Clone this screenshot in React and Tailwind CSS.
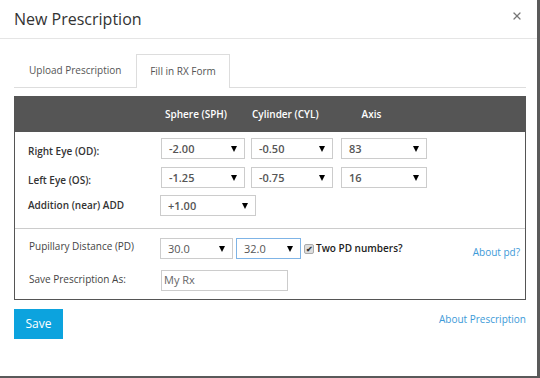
import { X } from 'lucide-react'

const font = { fontFamily: '"Open Sans", "Noto Sans", sans-serif' }

function Select({ value, className = '', focused = false }) {
  return (
    <div
      className={`flex items-center justify-between h-[21px] border pl-[7px] pr-[7px] text-[11px] text-[#555] ${
        focused ? 'border-[#7fb4e6]' : 'border-[#ccc]'
      } ${className}`}
    >
      <span className="pt-[2px]">{value}</span>
      {/* caret */}
      <span className="w-0 h-0 border-l-[3px] border-r-[3px] border-t-[6px] border-l-transparent border-r-transparent border-t-black" />
    </div>
  )
}

export default function App() {
  return (
    <div className="w-[540px] h-[378px] bg-[#5a5a5a] overflow-hidden" style={font}>
      <div className="w-[537px] h-[376px] bg-white flex flex-col">
        {/* Header */}
        <div className="flex justify-between h-[39px] border-b border-[#e5e5e5] pl-[14px] pr-[14px]">
          <h1 className="text-[16px] text-[#333] mt-[7px]">New Prescription</h1>
          <X className="w-[12px] h-[12px] text-[#777] mt-[10px]" strokeWidth={2.5} />
        </div>

        <div className="pl-[14px] pr-[11px] pt-[15px]">
          {/* Tabs */}
          <div className="flex h-[34px] border-b border-[#ddd]">
            <div className="w-[122px] flex items-center pl-[15px] text-[10px] text-[#555]">Upload Prescription</div>
            <div className="w-[94px] -mb-px bg-white border border-b-0 border-[#ddd] flex items-center justify-center text-[10px] text-[#555]">
              Fill in RX Form
            </div>
          </div>

          {/* RX box */}
          <div className="mt-[8px] border border-[#555]">
            <div className="h-[35px] bg-[#555] flex items-center text-[10px] font-semibold text-white">
              <span className="ml-[150px]">Sphere (SPH)</span>
              <span className="ml-[25px]">Cylinder (CYL)</span>
              <span className="ml-[43px]">Axis</span>
            </div>

            <div className="pt-[6px] pb-[12px] text-[10px] font-semibold text-[#333]">
              <div className="flex items-center h-[21px]">
                <span className="w-[146px] pl-[13px] pt-[5px]">Right Eye (OD):</span>
                <Select value="-2.00" className="w-[84px]" />
                <Select value="-0.50" className="w-[82px] ml-[6px]" />
                <Select value="83" className="w-[86px] ml-[8px]" />
              </div>
              <div className="flex items-center h-[21px] mt-[8px]">
                <span className="w-[146px] pl-[13px] pt-[5px]">Left Eye (OS):</span>
                <Select value="-1.25" className="w-[84px]" />
                <Select value="-0.75" className="w-[82px] ml-[6px]" />
                <Select value="16" className="w-[86px] ml-[8px]" />
              </div>
              <div className="flex items-center h-[21px] mt-[7px]">
                <span className="w-[145px] pl-[13px]">Addition (near) ADD</span>
                <Select value="+1.00" className="w-[96px]" />
              </div>
            </div>

            <div className="border-t border-[#ccc] pt-[9px] pb-[8px] text-[10px] text-[#444]">
              <div className="flex items-center h-[21px]">
                <span className="w-[145px] pl-[14px] -mt-[4px]">Pupillary Distance (PD)</span>
                <Select value="30.0" className="w-[73px]" />
                <Select value="32.0" focused className="w-[65px] ml-[3px]" />
                <label className="flex items-center ml-[3px] font-semibold text-[#222] text-[10px]">
                  <span className="w-[10px] h-[10px] bg-[#ddd] border border-[#aaa] rounded-[2px] flex items-center justify-center text-[8px] leading-none text-[#333]">
                    ✔
                  </span>
                  <span className="ml-[2px]">Two PD numbers?</span>
                </label>
                <a className="ml-auto mr-[5px] mt-[8px] text-[#3d9ad8] text-[10px]">About pd?</a>
              </div>
              <div className="flex items-center h-[21px] mt-[11px]">
                <span className="w-[146px] pl-[14px] -mt-[3px]">Save Prescription As:</span>
                <div className="w-[127px] h-[21px] border border-[#ccc] flex items-center px-[2px] text-[11px] text-[#666]">
                  My Rx
                </div>
              </div>
            </div>
          </div>

          {/* Footer */}
          <div className="flex items-center justify-between mt-[9px]">
            <button className="w-[49px] h-[30px] bg-[#0ca3de] text-white text-[12px]">Save</button>
            <a className="text-[10px] text-[#3d9ad8] -mt-[10px]">About Prescription</a>
          </div>
        </div>
      </div>
    </div>
  )
}
